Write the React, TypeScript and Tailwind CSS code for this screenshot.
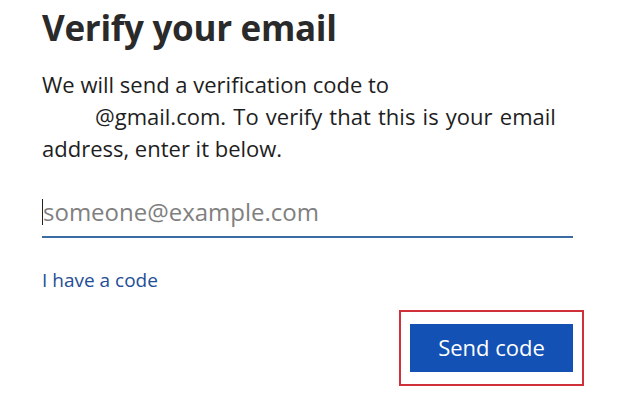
export default function App() {
  return (
    <div className="w-[625px] h-[397px] bg-white overflow-hidden font-['Open_Sans',sans-serif] text-[#222]">
      <div className="pl-[42px] pr-[40px] pt-[2px]">
        <h1 className="text-[35px] leading-[52px] font-bold text-[#2a2a2a] tracking-[-0.3px]">
          Verify your email
        </h1>
        <p className="mt-[14px] text-[22px] leading-[32px] text-[#1e1e1e]">
          We will send a verification code to
          <br />
          <span className="pl-[53px] [word-spacing:1.5px]">@gmail.com. To verify that this is your email</span>
          <br />
          address, enter it below.
        </p>
        <div className="mt-[28px] w-[531px] border-b-2 border-[#3a6ba3] flex items-center h-[46px] pb-[4px]">
          <span className="w-px h-[26px] bg-[#222]" />
          <span className="text-[24px] text-[#808080]">someone@example.com</span>
        </div>
        <div className="mt-[28px] text-[19px] text-[#1f4e96]">I have a code</div>
        <div className="flex justify-end mt-[15px] w-[542px]">
          <div className="border-2 border-[#d0303a] px-[9px] py-[12px]">
            <button className="w-[163px] h-[48px] bg-[#1351b4] text-white text-[22px]">
              Send code
            </button>
          </div>
        </div>
      </div>
    </div>
  )
}
